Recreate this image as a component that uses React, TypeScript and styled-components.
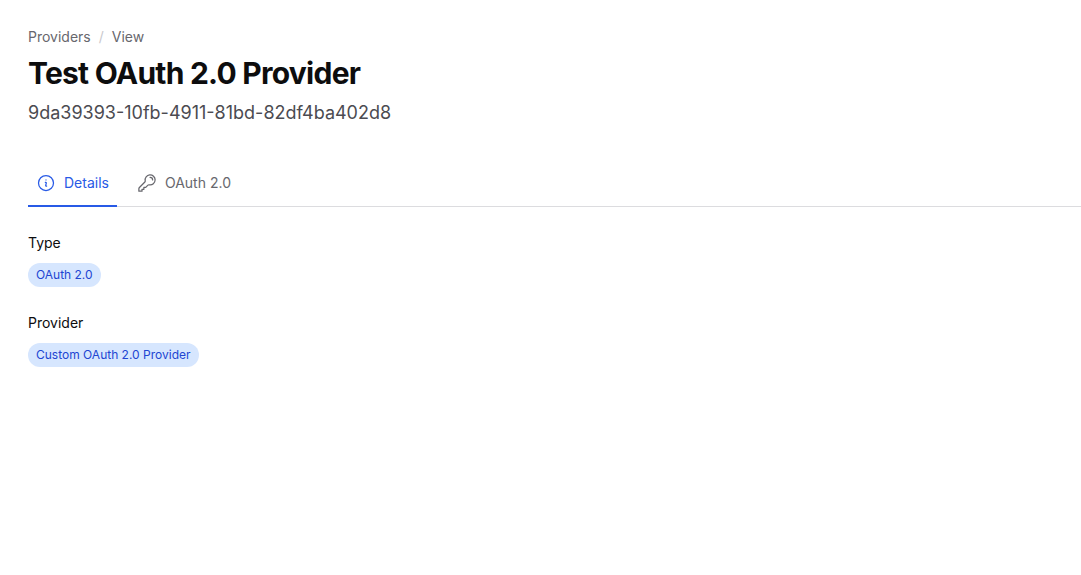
import React, { useState } from 'react';
import styled, { createGlobalStyle } from 'styled-components';
import { HiOutlineInformationCircle, HiOutlineKey } from 'react-icons/hi2';

const GlobalStyle = createGlobalStyle`
  * { box-sizing: border-box; }
  body {
    margin: 0;
    background: #ffffff;
    color: #0d0d0e;
    font-family: Inter, "Liberation Sans", sans-serif;
    font-size: 14px;
    line-height: 20px;
  }
`;

const Page = styled.main`
  padding: 27px 0 28px 28px;
`;

const Breadcrumbs = styled.nav`
  display: flex;
  gap: 8px;
  color: #67676d;
`;

const Crumb = styled.a`
  color: inherit;
  text-decoration: none;
`;

const Separator = styled.span`
  color: #c9c9cd;
`;

const Title = styled.h1`
  margin: 6px 0 0;
  font-size: 30px;
  line-height: 40px;
  font-weight: 700;
  letter-spacing: -0.025em;
`;

const Identifier = styled.p`
  margin: 6px 0 0;
  color: #4b4b51;
  font-size: 18px;
  line-height: 28px;
`;

const TabList = styled.div`
  display: flex;
  gap: 12px;
  margin-top: 32px;
  box-shadow: inset 0 -1px #dcdcdf;
`;

const Tab = styled.button<{ $active: boolean }>`
  display: flex;
  align-items: center;
  gap: 8px;
  height: 48px;
  padding: 2px 8px 0;
  border: 0;
  border-bottom: 2px solid ${(p) => (p.$active ? '#285ae6' : 'transparent')};
  background: none;
  color: ${(p) => (p.$active ? '#285ae6' : '#67676d')};
  font: inherit;
  cursor: pointer;

  svg {
    width: 20px;
    height: 20px;
  }
`;

const Details = styled.dl`
  display: grid;
  justify-items: start;
  gap: 26px;
  margin: 26px 0 0;
`;

const Field = styled.div`
  display: grid;
  justify-items: start;
  gap: 10px;
`;

const Label = styled.dt``;

const Value = styled.dd`
  margin: 0;
  padding: 2px 8px;
  border-radius: 12px;
  background: #d6e6fe;
  color: #2145d2;
  font-size: 12px;
  line-height: 20px;
`;

const tabs = [
  { label: 'Details', Icon: HiOutlineInformationCircle },
  { label: 'OAuth 2.0', Icon: HiOutlineKey },
];

const fields = [
  { label: 'Type', value: 'OAuth 2.0' },
  { label: 'Provider', value: 'Custom OAuth 2.0 Provider' },
];

export default function App() {
  const [active, setActive] = useState(0);
  return (
    <>
      <GlobalStyle />
      <Page>
        <Breadcrumbs aria-label="Breadcrumb">
          <Crumb href="#providers">Providers</Crumb>
          <Separator aria-hidden="true">/</Separator>
          <Crumb href="#view" aria-current="page">View</Crumb>
        </Breadcrumbs>
        <Title>Test OAuth 2.0 Provider</Title>
        <Identifier>9da39393-10fb-4911-81bd-82df4ba402d8</Identifier>
        <TabList role="tablist">
          {tabs.map(({ label, Icon }, i) => (
            <Tab
              key={label}
              type="button"
              role="tab"
              aria-selected={i === active}
              $active={i === active}
              onClick={() => setActive(i)}
            >
              <Icon aria-hidden="true" />
              {label}
            </Tab>
          ))}
        </TabList>
        <Details>
          {fields.map(({ label, value }) => (
            <Field key={label}>
              <Label>{label}</Label>
              <Value>{value}</Value>
            </Field>
          ))}
        </Details>
      </Page>
    </>
  );
}
